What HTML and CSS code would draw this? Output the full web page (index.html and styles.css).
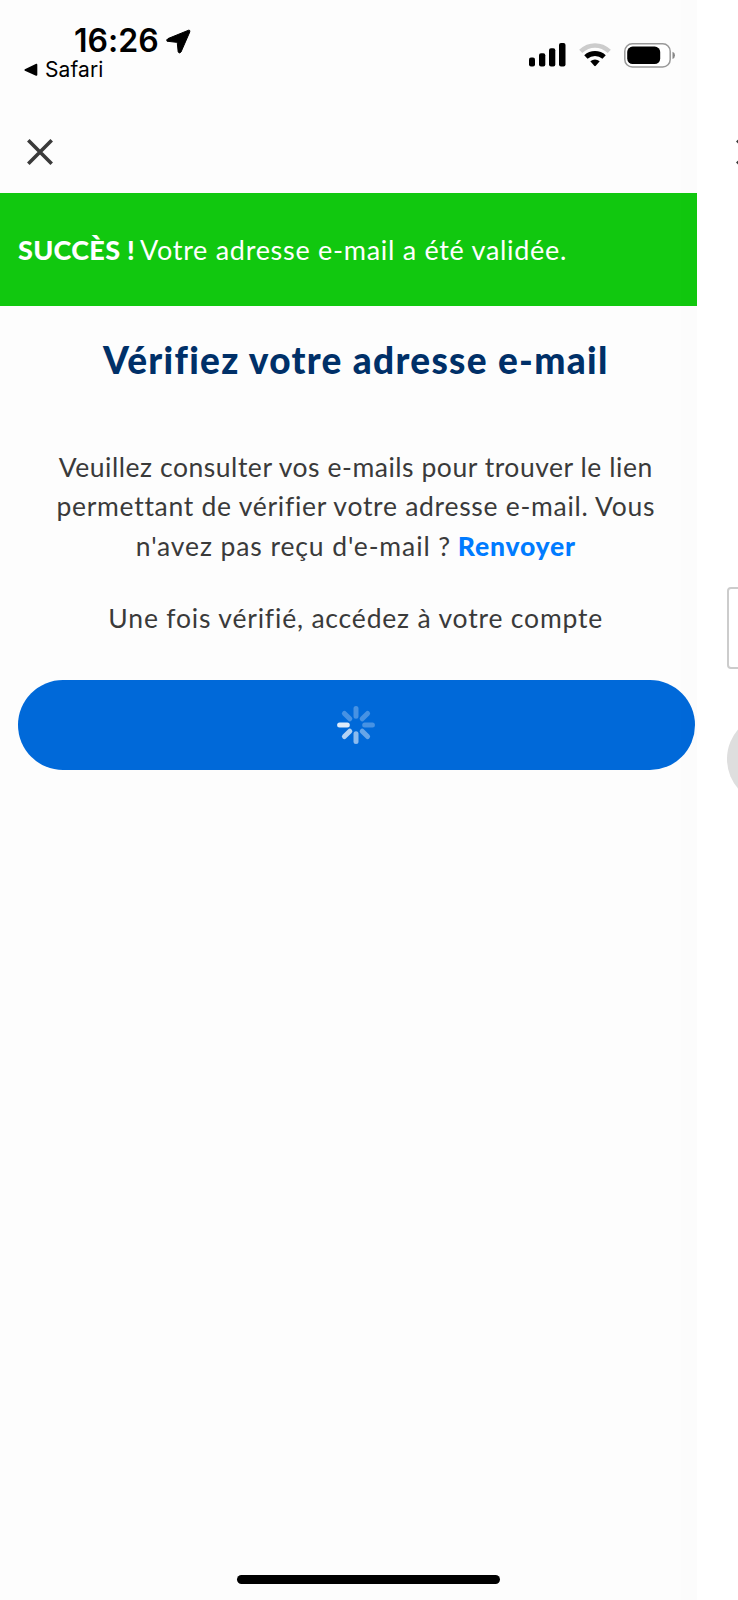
FILE: index.html
```html
<!DOCTYPE html>
<html lang="fr">
<head>
<meta charset="utf-8">
<title>Vérifiez votre adresse e-mail</title>
<link rel="stylesheet" href="styles.css">
</head>
<body>
<div class="stage">
  <main class="screen">
    <header class="status">
      <div class="status-left">
        <div class="clock"><span class="time">16:26</span>
          <svg class="location" width="25" height="25" viewBox="0 0 25 25"><path stroke="#000" stroke-width="1" stroke-linejoin="round" d="M22.6 1.2 2 9.6Q0 10.8 1 12.2L10.4 13.3Q11.2 13.4 11.3 14.2L12.2 23Q13.2 24.8 15 23L23.8 2.9Q24.2.7 22.6 1.2Z"/></svg>
        </div>
        <div class="back">
          <svg width="14" height="14" viewBox="0 0 14 14"><path d="M12.2.8Q13.3.4 13.3 1.8V11.8Q13.3 13.2 12 12.7L.9 7.7Q-.2 7 .9 6.2Z"/></svg>
          <span class="back-label">Safari</span>
        </div>
      </div>
      <div class="status-right">
        <svg width="37" height="24" viewBox="0 0 37 24"><rect x="0" y="14.5" width="6" height="9" rx="2"/><rect x="10" y="10.3" width="6.3" height="13.2" rx="2"/><rect x="20" y="5.3" width="6.3" height="18.2" rx="2"/><rect x="30" y="0" width="6.5" height="23.5" rx="2"/></svg>
        <svg width="32" height="24" viewBox="0 0 32 24"><g fill="none" stroke-width="4.6"><path stroke="#ccc" d="M1.7 8.4Q8.2 2.5 16 2.5T30.3 8.4"/><path stroke="#000" stroke-width="5" d="M6.9 14Q10.8 10.5 16 10.5T25.1 14"/></g><path d="M11.3 18.3Q16 14.8 20.7 18.3L16.8 22.8Q16 23.6 15.2 22.8Z"/></svg>
        <svg width="52" height="25" viewBox="0 0 52 25"><rect x=".8" y=".8" width="45.4" height="23.2" rx="7.5" fill="#fff" stroke="#999" stroke-width="1.5"/><rect x="3.2" y="3.6" width="33" height="17.4" rx="5.5"/><path d="M48.5 8.8Q51 9.5 51 12.3T48.5 16Z" fill="#888"/></svg>
      </div>
    </header>
    <nav class="toolbar">
      <svg class="close" width="26" height="26" viewBox="0 0 26 26"><path d="M1.3 1.3 24.7 24.7M24.7 1.3 1.3 24.7"/></svg>
    </nav>
    <div class="alert"><strong class="alert-title">SUCCÈS !</strong><span class="alert-text">Votre adresse e-mail a été validée.</span></div>
    <h1 class="title">Vérifiez votre adresse e-mail</h1>
    <p class="copy"><span class="line-a">Veuillez consulter vos e-mails pour trouver le lien</span><br><span class="line-b">permettant de vérifier votre adresse e-mail. Vous</span><br><span class="line-c">n'avez pas reçu d'e-mail ?</span> <a class="resend">Renvoyer</a></p>
    <p class="copy follow"><span class="line-d">Une fois vérifié, accédez à votre compte</span></p>
    <div class="button">
      <svg width="38" height="38" viewBox="-19 -19 38 38" fill="none" stroke="#fff" stroke-width="5" stroke-linecap="round"><path opacity=".28" d="M0-8.7V-16.4M6.2-6.2 11.6-11.6M8.7 0H16.4M-6.2-6.2-11.6-11.6"/><path opacity=".4" d="M6.2 6.2 11.6 11.6"/><path opacity=".55" d="M0 8.7V16.4"/><path opacity=".7" d="M-6.2 6.2-11.6 11.6"/><path opacity=".87" d="M-8.7 0H-16.4"/></svg>
    </div>
    <div class="home"></div>
  </main>
  <aside class="next">
    <svg class="close next-close" width="26" height="26" viewBox="0 0 26 26"><path d="M1.3 1.3 24.7 24.7M24.7 1.3 1.3 24.7"/></svg>
    <div class="next-field"></div>
    <div class="next-button"></div>
  </aside>
</div>
</body>
</html>
```

FILE: styles.css
```css
* { box-sizing: border-box; }
body { margin: 0; background: #fff; font-family: Lato, sans-serif; color: #3a3a3a; font-variant-ligatures: none; }
svg { display: block; flex: none; }
.stage { display: flex; width: 738px; height: 1600px; overflow: hidden; }
.screen { position: relative; display: flex; flex-direction: column; width: 696.5px; flex: none; background: #fdfdfd; }
.screen::after { content: ""; position: absolute; top: 0; right: 0; bottom: 0; width: 16px; background: rgba(0, 0, 0, .005); }

.status { display: flex; justify-content: space-between; height: 128px; color: #000; font-family: Inter, sans-serif; }
.status-left { padding: 22px 0 0 24px; }
.clock { display: flex; align-items: center; height: 38px; padding-left: 50px; }
.time { width: 91.5px; font-size: 32px; font-weight: 600; line-height: 38px; white-space: nowrap; }
.back { display: flex; align-items: center; gap: 7px; height: 19px; }
.back-label { font-size: 21px; line-height: 19px; font-weight: 400; letter-spacing: .1px; }
.status-right { display: flex; align-items: flex-start; padding: 43px 20.5px 0 0; }
.status-right svg:nth-child(1) { margin-right: 13px; }
.status-right svg:nth-child(2) { margin-right: 13.5px; }

.toolbar { height: 65px; padding: 11px 27px; }
.close { fill: none; stroke: #3a3a3a; stroke-width: 3.6; }

.alert { display: flex; align-items: center; height: 113px; padding-left: 18px; background: #11c80f; color: #fff; font-size: 27px; white-space: nowrap; }
.alert-title { width: 122px; font-weight: 900; letter-spacing: .3px; }
.alert-text { letter-spacing: .71px; }

.title { margin: 32px 0 0 15px; text-align: center; font-size: 37px; line-height: 44px; font-weight: 900; color: #003068; white-space: nowrap; letter-spacing: 1.3px; }
.copy { margin: 65.5px 0 0 15px; text-align: center; font-size: 26.5px; line-height: 39.5px; white-space: nowrap; }
.line-a { letter-spacing: .54px; }
.line-b { letter-spacing: .72px; }
.line-c { letter-spacing: .9px; }
.line-d { letter-spacing: .82px; }
.follow { margin-top: 33px; }
.resend { color: #007bff; font-weight: 900; letter-spacing: .8px; }

.button { display: flex; align-items: center; justify-content: center; height: 90px; margin: 41px 1.5px 0 17.5px; border-radius: 45px; background: #0069d9; }
.home { width: 263px; height: 9.5px; margin: auto 0 16px 237px; border-radius: 5px; background: #000; }

.next { flex: none; width: 41.5px; height: 1600px; overflow: hidden; }
.next-close { margin: 139px 0 0 39.5px; }
.next-field { width: 600px; height: 82px; margin: 422px 0 0 30.5px; border: 2px solid #ccc; border-radius: 4px; }
.next-button { width: 600px; height: 90px; margin: 45px 0 0 30px; border-radius: 45px; background: #dedede; }
```
